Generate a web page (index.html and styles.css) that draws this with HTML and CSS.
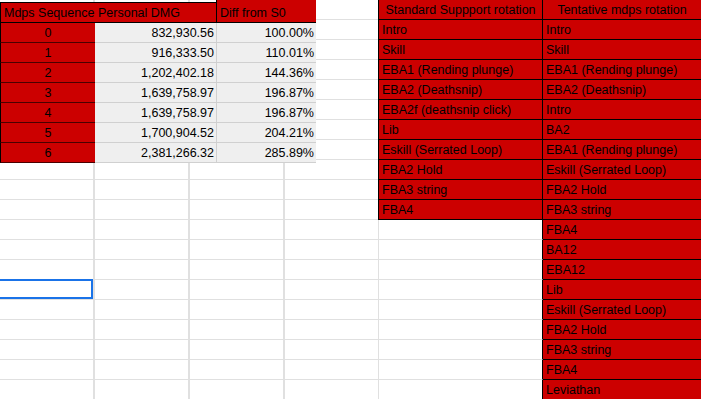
FILE: index.html
```html
<!DOCTYPE html>
<html lang="en">
<head>
  <meta charset="UTF-8" />
  <meta name="viewport" content="width=device-width, initial-scale=1.0" />
  <title>Rotation sheet</title>
  <link rel="stylesheet" href="styles.css">
</head>
<body>
  <div class="sheet">

    <!-- Damage table -->
    <section class="left-pane">
      <div class="dmg">
        <div class="hd seq-hd">Mdps Sequence</div>
        <div class="hd">Personal DMG</div>
        <div class="hd diff">Diff from S0</div>

        <div class="seq">0</div><div class="num">832,930.56</div><div class="num pct">100.00%</div>
        <div class="seq">1</div><div class="num">916,333.50</div><div class="num pct">110.01%</div>
        <div class="seq">2</div><div class="num">1,202,402.18</div><div class="num pct">144.36%</div>
        <div class="seq">3</div><div class="num">1,639,758.97</div><div class="num pct">196.87%</div>
        <div class="seq">4</div><div class="num">1,639,758.97</div><div class="num pct">196.87%</div>
        <div class="seq">5</div><div class="num">1,700,904.52</div><div class="num pct">204.21%</div>
        <div class="seq">6</div><div class="num">2,381,266.32</div><div class="num pct">285.89%</div>
      </div>
    </section>

    <!-- Rotations -->
    <section class="rot">
      <div class="std head">Standard Suppport rotation</div><div class="head">Tentative mdps rotation</div>
      <div class="std">Intro</div><div>Intro</div>
      <div class="std">Skill</div><div>Skill</div>
      <div class="std">EBA1 (Rending plunge)</div><div>EBA1 (Rending plunge)</div>
      <div class="std">EBA2 (Deathsnip)</div><div>EBA2 (Deathsnip)</div>
      <div class="std">EBA2f (deathsnip click)</div><div>Intro</div>
      <div class="std">Lib</div><div>BA2</div>
      <div class="std">Eskill (Serrated Loop)</div><div>EBA1 (Rending plunge)</div>
      <div class="std">FBA2 Hold</div><div>Eskill (Serrated Loop)</div>
      <div class="std">FBA3 string</div><div>FBA2 Hold</div>
      <div class="std">FBA4</div><div>FBA3 string</div>
      <div class="std blank"></div><div>FBA4</div>
      <div class="std blank"></div><div>BA12</div>
      <div class="std blank"></div><div>EBA12</div>
      <div class="std blank"></div><div>Lib</div>
      <div class="std blank"></div><div>Eskill (Serrated Loop)</div>
      <div class="std blank"></div><div>FBA2 Hold</div>
      <div class="std blank"></div><div>FBA3 string</div>
      <div class="std blank"></div><div>FBA4</div>
      <div class="std blank"></div><div>Leviathan</div>
    </section>

    <!-- Active cell -->
    <div class="sel"></div>
  </div>
</body>
</html>
```

FILE: styles.css
```css
body {
  font-family: "Liberation Sans", Arial, sans-serif;
  font-size: 12.5px;
  color: #000;
  margin: 0;
  padding: 0;
  overflow: hidden;
}

/* empty sheet grid behind everything */
.sheet {
  position: relative;
  display: flex;
  align-items: flex-start;
  height: 399px;
  background-color: #fff;
  background-image:
    linear-gradient(to bottom, transparent 19px, #e0e0e0 19px),
    linear-gradient(to right, transparent 93px, #e0e0e0 93px);
  background-size: 100% 20px, 95px 100%;
}

.left-pane {
  flex: none;
  width: 378px;
}

.dmg {
  display: grid;
  grid-template-columns: 95px 121px 100px;
  margin-top: 2px;
}

.dmg div,
.rot div {
  box-sizing: border-box;
  height: 20px;
  padding: 2px 3px 0;
  line-height: 17px;
  white-space: nowrap;
  overflow: hidden;
}

.dmg div {
  border-bottom: 1px solid #d0d0d0;
}

.dmg .hd {
  height: 21px;
  background: #cc0000;
  border-top: 1px solid #000;
  border-bottom-color: #000;
}

.dmg .hd.diff {
  height: 23px;
  margin-top: -2px;
  padding-top: 5px;
  border-top: none;
  border-left: 1px solid #000;
}

.dmg .seq-hd,
.dmg .seq {
  border-left: 1px solid #000;
}

.dmg .seq {
  background: #cc0000;
  text-align: center;
  border-bottom-color: #4a0000;
}

.dmg .num {
  background: #efefef;
  text-align: right;
  padding-right: 2px;
}

.dmg .pct {
  border-left: 1px solid #d0d0d0;
}

.rot {
  flex: none;
  display: grid;
  grid-template-columns: 165px 158px;
}

.rot div {
  background: #cc0000;
  border-bottom: 1px solid #000;
}

.rot .std {
  border-left: 1px solid #000;
  border-right: 1px solid #000;
}

.rot .head {
  text-align: center;
}

.rot .blank {
  background: #fff;
  border-left-color: #e0e0e0;
  border-bottom-color: #e0e0e0;
}

.sel {
  position: absolute;
  left: -2px;
  top: 279px;
  width: 95px;
  height: 20px;
  box-sizing: border-box;
  border: 2px solid #1a73e8;
}
```
